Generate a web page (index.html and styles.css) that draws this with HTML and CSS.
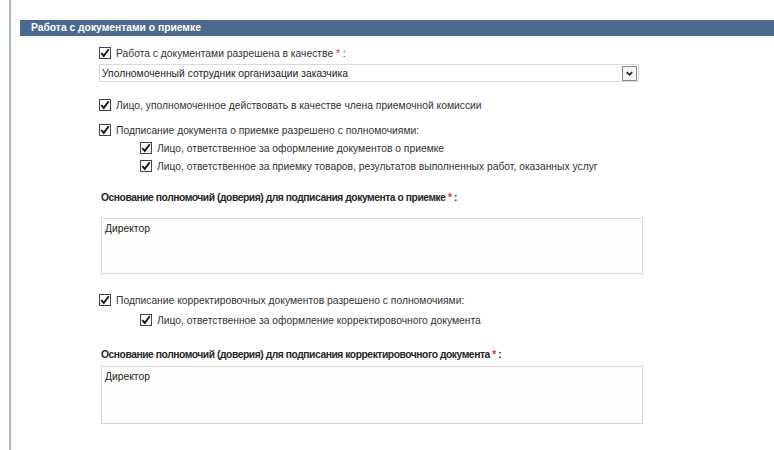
FILE: index.html
```html
<!DOCTYPE html>
<html lang="ru">
<head>
<meta charset="utf-8">
<title>Работа с документами о приемке</title>
<link rel="stylesheet" href="styles.css">
</head>
<body>
<div class="page">
  <div class="header">Работа с документами о приемке</div>
  <div class="content">
    <div class="row r1">
      <span class="cb"><svg viewBox="0 0 12 12" width="10" height="10"><path d="M1.5 6 L4.5 9.5 L10.5 1.5" fill="none" stroke="#111" stroke-width="2.2"/></svg></span>
      <span class="txt">Работа с документами разрешена в качестве <span class="req">*</span> :</span>
    </div>
    <div class="select">
      <span class="sel-text">Уполномоченный сотрудник организации заказчика</span>
      <span class="sel-btn"><svg viewBox="0 0 10 10" width="9" height="9"><path d="M2 3.5 L5 6.5 L8 3.5" fill="none" stroke="#222" stroke-width="1.8"/></svg></span>
    </div>
    <div class="row r2">
      <span class="cb"><svg viewBox="0 0 12 12" width="10" height="10"><path d="M1.5 6 L4.5 9.5 L10.5 1.5" fill="none" stroke="#111" stroke-width="2.2"/></svg></span>
      <span class="txt">Лицо, уполномоченное действовать в качестве члена приемочной комиссии</span>
    </div>
    <div class="row r3">
      <span class="cb"><svg viewBox="0 0 12 12" width="10" height="10"><path d="M1.5 6 L4.5 9.5 L10.5 1.5" fill="none" stroke="#111" stroke-width="2.2"/></svg></span>
      <span class="txt">Подписание документа о приемке разрешено с полномочиями:</span>
    </div>
    <div class="row sub">
      <span class="cb"><svg viewBox="0 0 12 12" width="10" height="10"><path d="M1.5 6 L4.5 9.5 L10.5 1.5" fill="none" stroke="#111" stroke-width="2.2"/></svg></span>
      <span class="txt">Лицо, ответственное за оформление документов о приемке</span>
    </div>
    <div class="row sub">
      <span class="cb"><svg viewBox="0 0 12 12" width="10" height="10"><path d="M1.5 6 L4.5 9.5 L10.5 1.5" fill="none" stroke="#111" stroke-width="2.2"/></svg></span>
      <span class="txt">Лицо, ответственное за приемку товаров, результатов выполненных работ, оказанных услуг</span>
    </div>
    <div class="label l1">Основание полномочий (доверия) для подписания документа о приемке <span class="req">*</span> :</div>
    <div class="area a1">Директор</div>

    <div class="row r4">
      <span class="cb"><svg viewBox="0 0 12 12" width="10" height="10"><path d="M1.5 6 L4.5 9.5 L10.5 1.5" fill="none" stroke="#111" stroke-width="2.2"/></svg></span>
      <span class="txt">Подписание корректировочных документов разрешено с полномочиями:</span>
    </div>
    <div class="row sub s4">
      <span class="cb"><svg viewBox="0 0 12 12" width="10" height="10"><path d="M1.5 6 L4.5 9.5 L10.5 1.5" fill="none" stroke="#111" stroke-width="2.2"/></svg></span>
      <span class="txt">Лицо, ответственное за оформление корректировочного документа</span>
    </div>
    <div class="label l2">Основание полномочий (доверия) для подписания корректировочного документа <span class="req">*</span> :</div>
    <div class="area a2">Директор</div>
  </div>
</div>
</body>
</html>
```
FILE: styles.css
```css
html, body {
  margin: 0;
  padding: 0;
  background: #ffffff;
}
body {
  font-family: "Liberation Sans", Arial, sans-serif;
  font-size: 10.3px;
  color: #333333;
}
.page {
  margin-left: 9px;
  border-left: 2px solid #a6b9cf;
  min-height: 450px;
  padding-top: 20px;
  box-sizing: border-box;
}
.header {
  margin-left: 9px;
  height: 16px;
  line-height: 16px;
  background: #4c6a90;
  color: #ffffff;
  font-weight: bold;
  font-size: 10.3px;
  padding-left: 11px;
}
.content {
  padding-left: 88px;
}
.row {
  display: flex;
  align-items: center;
  height: 18px;
}
.cb {
  width: 10px;
  height: 10px;
  border: 1px solid #444444;
  background: #ffffff;
  display: flex;
  align-items: center;
  justify-content: center;
  margin-right: 5px;
  flex: none;
}
.cb svg { display: block; }
.txt { white-space: nowrap; }
.req { color: #e03030; }
.r1 { margin-top: 8px; }
.select {
  margin-top: 2px;
  width: 540px;
  height: 18px;
  box-sizing: border-box;
  border: 1px solid #dadada;
  background: #ffffff;
  display: flex;
  align-items: center;
  justify-content: space-between;
  padding-left: 2px;
  padding-right: 1px;
  color: #222222;
}
.sel-btn {
  width: 13px;
  height: 13px;
  border: 1px solid #8a8a8a;
  background: #f2f2f2;
  display: flex;
  align-items: center;
  justify-content: center;
}
.sel-btn svg { display: block; }
.r2 { margin-top: 14px; }
.r3 { margin-top: 7px; }
.sub { padding-left: 41px; }
.label {
  font-weight: bold;
  font-size: 10.3px;
  letter-spacing: -0.45px;
  color: #262626;
  line-height: 16px;
  padding-left: 2px;
  white-space: nowrap;
}
.l1 { margin-top: 15px; }
.area {
  margin-left: 2px;
  width: 542px;
  box-sizing: border-box;
  border: 1px solid #d6d6d6;
  background: #fdfdfb;
  padding: 4px 3px;
  color: #222222;
}
.a1 { margin-top: 12px; height: 56px; }
.r4 { margin-top: 17px; }
.s4 { margin-top: 2px; }
.l2 { margin-top: 18px; }
.a2 { margin-top: 3px; height: 58px; }
```
